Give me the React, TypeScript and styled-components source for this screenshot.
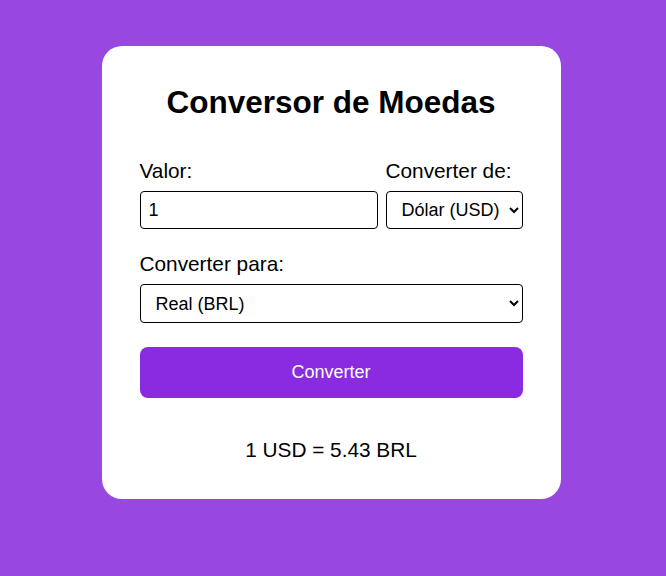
import styled, { createGlobalStyle } from 'styled-components'

const GlobalStyle = createGlobalStyle`
  html, body {
    margin: 0;
    padding: 0;
  }
  body {
    background-color: #9848e0;
    font-family: "Liberation Sans", Arial, sans-serif;
    min-height: 576px;
  }
`

const Page = styled.main`
  display: flex;
  justify-content: center;
  padding: 46px 4px 0 0;
`

const Card = styled.section`
  background-color: white;
  border-radius: 20px;
  box-sizing: border-box;
  width: 459px;
  padding: 38px 38px 37px;
  display: flex;
  flex-direction: column;
`

const Title = styled.h1`
  font-size: 31.5px;
  font-weight: bold;
  text-align: center;
  margin: 0 0 38px;
  color: #000;
`

const Row = styled.div`
  display: flex;
  gap: 8px;
  margin-bottom: 23px;
`

const Field = styled.div<{ $grow?: boolean }>`
  display: flex;
  flex-direction: column;
  flex: ${({ $grow }) => ($grow ? '1' : 'none')};
`

const Label = styled.label`
  font-size: 20.8px;
  color: #000;
  margin-bottom: 8px;
`

const Input = styled.input`
  font-family: "Liberation Sans", Arial, sans-serif;
  font-size: 18px;
  padding: 8px;
  border: 1px solid #000;
  border-radius: 4px;
  box-sizing: border-box;
  height: 38px;
  width: 100%;
`

const Select = styled.select<{ $tall?: boolean }>`
  font-family: "Liberation Sans", Arial, sans-serif;
  font-size: 18px;
  padding: 0 5px 0 11px;
  border: 1px solid #000;
  border-radius: 4px;
  background: white;
  color: #000;
  height: ${({ $tall }) => ($tall ? '39px' : '38px')};
  width: 100%;
`

const Button = styled.button`
  margin-top: 24px;
  height: 51px;
  background-color: #8a2be2;
  color: white;
  font-family: "Liberation Sans", Arial, sans-serif;
  font-size: 18px;
  border: none;
  border-radius: 8px;
  cursor: pointer;
`

const Result = styled.p`
  font-size: 20.8px;
  text-align: center;
  margin: 40px 0 0;
  color: #000;
`

export default function App() {
  return (
    <>
      <GlobalStyle />
      <Page>
        <Card>
          <Title>Conversor de Moedas</Title>
          <Row>
            <Field $grow>
              <Label>Valor:</Label>
              <Input type="number" defaultValue="1" />
            </Field>
            <Field>
              <Label>Converter de:</Label>
              <Select defaultValue="USD">
                <option value="USD">Dólar (USD)</option>
                <option value="EUR">Euro (EUR)</option>
                <option value="BRL">Real (BRL)</option>
              </Select>
            </Field>
          </Row>
          <Field>
            <Label>Converter para:</Label>
            <Select $tall defaultValue="BRL">
              <option value="USD">Dólar (USD)</option>
              <option value="EUR">Euro (EUR)</option>
              <option value="BRL">Real (BRL)</option>
            </Select>
          </Field>
          <Button>Converter</Button>
          <Result>1 USD = 5.43 BRL</Result>
        </Card>
      </Page>
    </>
  )
}
